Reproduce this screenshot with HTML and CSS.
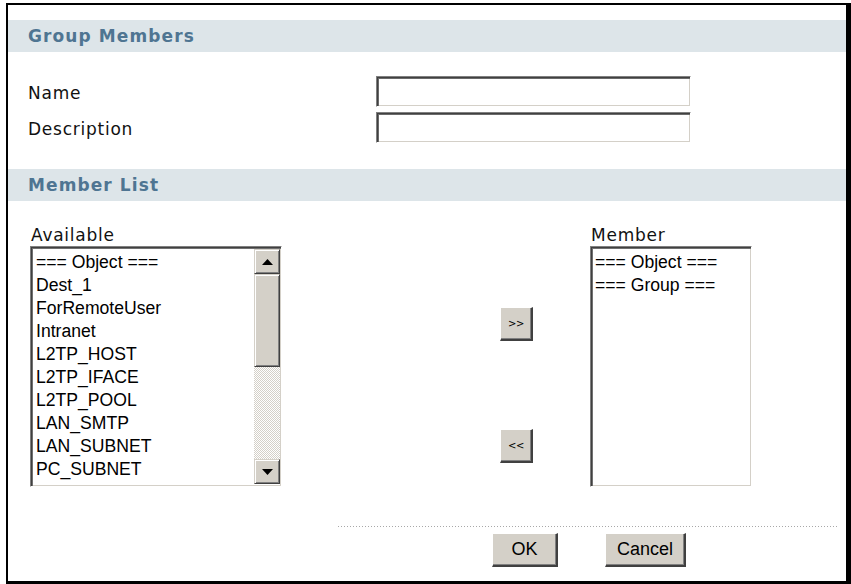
FILE: index.html
```html
<!DOCTYPE html>
<html>
<head>
<meta charset="utf-8">
<link rel="stylesheet" href="styles.css">
</head>
<body>
<div class="frame">
  <div class="section-head">Group Members</div>
  <div class="form">
    <div class="form-row">
      <label class="form-label">Name</label>
      <div class="textbox"></div>
    </div>
    <div class="form-row">
      <label class="form-label">Description</label>
      <div class="textbox"></div>
    </div>
  </div>
  <div class="section-head second">Member List</div>
  <div class="lists">
    <div class="list-col available">
      <div class="list-label">Available</div>
      <div class="listbox">
        <div class="items">
          <div class="item">=== Object ===</div>
          <div class="item">Dest_1</div>
          <div class="item">ForRemoteUser</div>
          <div class="item">Intranet</div>
          <div class="item">L2TP_HOST</div>
          <div class="item">L2TP_IFACE</div>
          <div class="item">L2TP_POOL</div>
          <div class="item">LAN_SMTP</div>
          <div class="item">LAN_SUBNET</div>
          <div class="item">PC_SUBNET</div>
        </div>
        <div class="vscroll">
          <div class="sb-btn"><svg width="11" height="6" viewBox="0 0 11 6"><polygon points="5.5,0 11,6 0,6" fill="#000"/></svg></div>
          <div class="sb-thumb"></div>
          <div class="sb-track"></div>
          <div class="sb-btn"><svg width="11" height="6" viewBox="0 0 11 6"><polygon points="0,0 11,0 5.5,6" fill="#000"/></svg></div>
        </div>
      </div>
    </div>
    <div class="move-col">
      <button class="win-btn move-btn">&gt;&gt;</button>
      <button class="win-btn move-btn">&lt;&lt;</button>
    </div>
    <div class="list-col member">
      <div class="list-label">Member</div>
      <div class="listbox">
        <div class="items">
          <div class="item">=== Object ===</div>
          <div class="item">=== Group ===</div>
        </div>
      </div>
    </div>
  </div>
  <div class="dots"></div>
  <div class="actions">
    <button class="win-btn action-btn ok">OK</button>
    <button class="win-btn action-btn cancel">Cancel</button>
  </div>
</div>
</body>
</html>
```
FILE: styles.css
```css
html, body {
  margin: 0;
  padding: 0;
  background: #fff;
}
.frame {
  box-sizing: border-box;
  margin: 3px 0 0 6px;
  width: 845px;
  height: 581px;
  border-style: solid;
  border-color: #000;
  border-width: 2px 5px 3px 2px;
  font-family: "DejaVu Sans", Verdana, sans-serif;
  color: #111;
  overflow: hidden;
}
.section-head {
  margin-top: 15px;
  height: 32px;
  line-height: 32px;
  background: #dde5e9;
  padding-left: 20px;
  font-weight: bold;
  font-size: 17px;
  letter-spacing: 1.1px;
  color: #4f7592;
}
.section-head.second {
  margin-top: 26px;
}
.form {
  margin-top: 24px;
  padding-left: 20px;
  display: flex;
  flex-direction: column;
  gap: 5px;
}
.form-row {
  display: flex;
  align-items: center;
  height: 31px;
}
.form-label {
  width: 348px;
  font-size: 17px;
  letter-spacing: 0.75px;
  padding-top: 2px;
}
.textbox {
  box-sizing: border-box;
  width: 315px;
  height: 31px;
  background: #fff;
  border-style: solid;
  border-width: 1px;
  border-color: #808080 #fff #fff #808080;
  box-shadow: inset 1px 1px 0 #404040, inset 2px 2px 0 #6a6a6a, inset -1px -1px 0 #d4d0c8;
}
.lists {
  margin-top: 25px;
  padding-left: 22px;
  display: flex;
  align-items: flex-start;
}
.list-col {
  display: flex;
  flex-direction: column;
}
.list-label {
  font-size: 17px;
  letter-spacing: 0.75px;
  line-height: 18px;
  height: 18px;
  margin-bottom: 2px;
  padding-left: 1px;
}
.available { width: 252px; }
.member { width: 162px; margin-left: 57px; }
.listbox {
  box-sizing: border-box;
  height: 241px;
  display: flex;
  background: #fff;
  border-style: solid;
  border-width: 1px;
  border-color: #808080 #fff #fff #808080;
  box-shadow: inset 1px 1px 0 #404040, inset 2px 2px 0 #707070, inset -1px -1px 0 #d4d0c8;
  overflow: hidden;
}
.items {
  flex: 1;
  padding: 4px 0 0 5px;
  font-family: "Liberation Sans", Arial, sans-serif;
  font-size: 17.6px;
  line-height: 23px;
  color: #000;
  overflow: hidden;
  white-space: nowrap;
}
.member .items { padding-left: 4px; }
.vscroll {
  width: 26px;
  margin: 2px 1px 2px 0;
  display: flex;
  flex-direction: column;
}
.sb-btn, .sb-thumb {
  box-sizing: border-box;
  background: #d4d0c8;
  border-style: solid;
  border-width: 1px;
  border-color: #d4d0c8 #404040 #404040 #d4d0c8;
  box-shadow: inset 1px 1px 0 #fff, inset -1px -1px 0 #808080;
}
.sb-btn {
  height: 25px;
  display: flex;
  align-items: center;
  justify-content: center;
}
.sb-thumb {
  height: 93px;
}
.sb-track {
  flex: 1;
  background-color: #f4f3f0;
  background-image: repeating-conic-gradient(#d4d0c8 0 25%, #fff 0 50%);
  background-size: 2px 2px;
}
.move-col {
  width: 33px;
  margin-left: 218px;
  padding-top: 81px;
  display: flex;
  flex-direction: column;
  gap: 88px;
}
.win-btn {
  box-sizing: border-box;
  margin: 0;
  padding: 0;
  background: #d4d0c8;
  border-style: solid;
  border-width: 1px 2px 2px 1px;
  border-color: #fff #404040 #404040 #fff;
  box-shadow: inset -1px -1px 0 #808080;
  color: #000;
  cursor: default;
}
.move-btn {
  width: 33px;
  height: 34px;
  font-family: "DejaVu Sans", Verdana, sans-serif;
  font-size: 10px;
  letter-spacing: -0.5px;
}
.dots {
  margin: 39px 8px 0 330px;
  height: 1px;
  background-image: repeating-linear-gradient(to right, #a8a8a8 0 1px, transparent 1px 3px);
}
.actions {
  margin-top: 6px;
  padding-left: 484px;
  display: flex;
  gap: 47px;
}
.action-btn {
  height: 34px;
  font-family: "Liberation Sans", Arial, sans-serif;
  font-size: 18px;
}
.ok { width: 66px; }
.cancel { width: 81px; }
```
